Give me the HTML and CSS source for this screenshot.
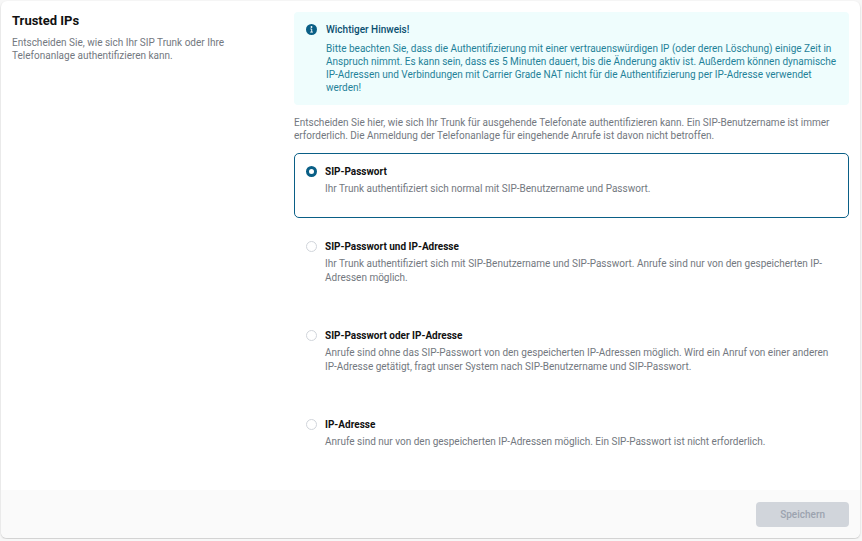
FILE: index.html
```
<!DOCTYPE html>
<html lang="de">
<head>
    <meta charset="UTF-8">
    <meta name="viewport" content="width=device-width, initial-scale=1.0">
    <title>Trusted IPs</title>
    <link rel="stylesheet" href="styles.css">
</head>
<body>

<form class="card">
    <div class="card-body">
        <div class="intro">
            <h1>Trusted IPs</h1>
            <p>Entscheiden Sie, wie sich Ihr SIP Trunk oder Ihre Telefonanlage authentifizieren kann.</p>
        </div>

        <div class="content">
            <div class="alert">
                <svg class="alert-icon" viewBox="0 0 11 11" aria-hidden="true">
                    <circle cx="5.5" cy="5.5" r="5.5" fill="#0a5f86"/>
                    <circle cx="5.5" cy="3" r="0.9" fill="#fff"/>
                    <path d="M4.4 5h1.3v3M4.2 8.1h2.7" fill="none" stroke="#fff" stroke-width="0.9"/>
                </svg>
                <div>
                    <h2>Wichtiger Hinweis!</h2>
                    <p>Bitte beachten Sie, dass die Authentifizierung mit einer vertrauenswürdigen IP (oder deren Löschung) einige Zeit in Anspruch nimmt. Es kann sein, dass es 5 Minuten dauert, bis die Änderung aktiv ist. Außerdem können dynamische IP-Adressen und Verbindungen mit Carrier Grade NAT nicht für die Authentifizierung per IP-Adresse verwendet werden!</p>
                </div>
            </div>

            <p class="hint">Entscheiden Sie hier, wie sich Ihr Trunk für ausgehende Telefonate authentifizieren kann. Ein SIP-Benutzername ist immer erforderlich. Die Anmeldung der Telefonanlage für eingehende Anrufe ist davon nicht betroffen.</p>

            <div class="options">
                <label class="option" for="authPassword">
                    <input type="radio" id="authPassword" name="auth" value="password" checked>
                    <span class="option-text">
                        <strong>SIP-Passwort</strong>
                        <span>Ihr Trunk authentifiziert sich normal mit SIP-Benutzername und Passwort.</span>
                    </span>
                </label>
                <label class="option" for="authBoth">
                    <input type="radio" id="authBoth" name="auth" value="both">
                    <span class="option-text">
                        <strong>SIP-Passwort und IP-Adresse</strong>
                        <span>Ihr Trunk authentifiziert sich mit SIP-Benutzername und SIP-Passwort. Anrufe sind nur von den gespeicherten IP-Adressen möglich.</span>
                    </span>
                </label>
                <label class="option" for="authEither">
                    <input type="radio" id="authEither" name="auth" value="either">
                    <span class="option-text">
                        <strong>SIP-Passwort oder IP-Adresse</strong>
                        <span>Anrufe sind ohne das SIP-Passwort von den gespeicherten IP-Adressen möglich. Wird ein Anruf von einer anderen IP-Adresse getätigt, fragt unser System nach SIP-Benutzername und SIP-Passwort.</span>
                    </span>
                </label>
                <label class="option" for="authIp">
                    <input type="radio" id="authIp" name="auth" value="ip">
                    <span class="option-text">
                        <strong>IP-Adresse</strong>
                        <span>Anrufe sind nur von den gespeicherten IP-Adressen möglich. Ein SIP-Passwort ist nicht erforderlich.</span>
                    </span>
                </label>
            </div>
        </div>
    </div>

    <div class="card-footer">
        <button type="submit" disabled>Speichern</button>
    </div>
</form>

</body>
</html>
```
FILE: styles.css
```
* {
    box-sizing: border-box;
}

body {
    margin: 0;
    padding: 1px 2px 1px 1px;
    background-color: #f7f7f7;
    font-family: Roboto, "Liberation Sans", sans-serif;
    font-size: 10px;
    line-height: 13px;
    color: #737880;
}

h1,
h2,
p {
    margin: 0;
}

.card {
    background-color: #fff;
    border-radius: 6px;
    box-shadow: 0 1px 2px rgba(0, 0, 0, 0.2);
    overflow: hidden;
}

.card-body {
    display: grid;
    grid-template-columns: repeat(3, 1fr);
    gap: 9px;
    padding: 11px 11px 19px;
}

h1 {
    margin-bottom: 6px;
    font-size: 13px;
    font-weight: 700;
    line-height: 18px;
    color: #111;
}

.intro p {
    max-width: 240px;
}

.content {
    grid-column: span 2;
}

.alert {
    display: flex;
    gap: 9px;
    padding: 11px 12px;
    border-radius: 4px;
    background-color: #effdfd;
    color: #1f8299;
}

.alert-icon {
    flex: none;
    width: 11px;
    height: 11px;
    margin-top: 1px;
}

.alert h2 {
    margin-bottom: 6px;
    font-size: 10px;
    font-weight: 500;
    color: #0a4f70;
}

.hint {
    margin: 11px 0;
}

.options {
    display: grid;
    gap: 10px;
}

.option {
    display: flex;
    gap: 8px;
    padding: 11px 11px 21px;
    border: 1px solid transparent;
    border-radius: 5px;
    cursor: pointer;
}

.option:has(input:checked) {
    border-color: #0a5f86;
}

.option input {
    appearance: none;
    flex: none;
    width: 11px;
    height: 11px;
    margin: 1px 0 0;
    border: 1px solid #d1d5db;
    border-radius: 50%;
    background-color: #fff;
}

.option input:checked {
    border: 3px solid #0a5f86;
}

.option strong,
.option-text span {
    display: block;
}

.option strong {
    margin-bottom: 4px;
    font-weight: 700;
    color: #111;
}

.option-text span {
    line-height: 14px;
}

.card-footer {
    display: flex;
    justify-content: flex-end;
    padding: 12px 11px 11px;
    background-color: #fafafa;
}

button {
    padding: 6px 24px;
    border: none;
    border-radius: 4px;
    background-color: #d1d5db;
    font: inherit;
    font-weight: 500;
    color: #9ca3af;
}
```
